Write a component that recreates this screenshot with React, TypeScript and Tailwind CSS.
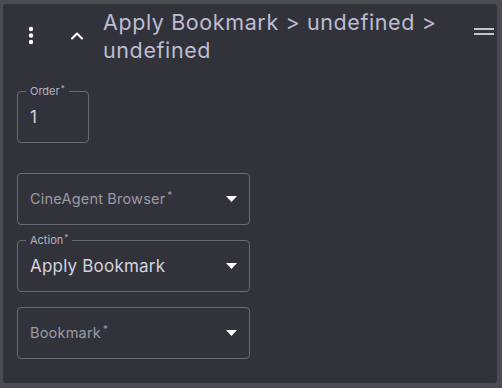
import { ChevronUp } from "lucide-react";

function Caret() {
  return (
    <svg width="11" height="6" viewBox="0 0 11 6" className="shrink-0">
      <path d="M0 0 L11 0 L5.5 6 Z" fill="#ffffff" />
    </svg>
  );
}

interface FieldProps {
  label: string;
  value?: string;
  select?: boolean;
  width: string;
}

function Field({ label, value, select, width }: FieldProps) {
  const filled = value !== undefined;
  return (
    <div className={`relative h-[52px] ${width} rounded-[4px] border border-[#6a6a72]`}>
      {filled && (
        <span className="absolute -top-[8px] left-[8px] bg-[#32323b] px-[4px] text-[11px] leading-[14px] text-[#b4b4c0]">
          {label}
          <sup className="ml-[1px] text-[8px]">*</sup>
        </span>
      )}
      <div className="flex h-full items-center justify-between pl-[12px] pr-[12px]">
        {filled ? (
          <span className="pt-[2px] text-[17px] tracking-[0.2px] text-[#d4d4de]">{value}</span>
        ) : (
          <span className="text-[14.5px] tracking-[0.2px] text-[#9b9ba6]">
            {label}
            <sup className="ml-[2px] text-[10px]">*</sup>
          </span>
        )}
        {select && <Caret />}
      </div>
    </div>
  );
}

export default function App() {
  return (
    <div className="h-[388px] w-[502px] bg-[#4b4b52] pl-[3px] pr-[5px] pt-[4px] pb-[5px] font-['Inter',sans-serif]">
      <div className="h-full rounded-[3px] bg-[#32323b]">
        {/* Header */}
        <div className="flex items-start">
          <div className="flex items-center pl-[22px] pt-[22px]">
            <svg width="12" height="20" viewBox="0 0 12 20">
              <circle cx="6" cy="3" r="2.2" fill="#fff" />
              <circle cx="6" cy="9.5" r="2.2" fill="#fff" />
              <circle cx="6" cy="16" r="2.2" fill="#fff" />
            </svg>
            <ChevronUp size={20} strokeWidth={2.5} color="#fff" className="ml-[30px]" />
          </div>
          <h2 className="ml-[16px] mt-[4px] w-[360px] text-[21.5px] leading-[28px] tracking-[0.6px] text-[#bdbdd0]">
            Apply Bookmark &gt; undefined &gt; undefined
          </h2>
          <div className="ml-auto mr-[3px] mt-[24px] flex flex-col gap-[3px]">
            <div className="h-[2px] w-[20px] bg-[#c4c4d0]" />
            <div className="h-[2px] w-[20px] bg-[#c4c4d0]" />
          </div>
        </div>

        {/* Form */}
        <div className="flex flex-col gap-[15px] pl-[14px] pt-[27px]">
          <Field label="Order" value="1" width="w-[72px]" />
          <div className="mt-[15px]">
            <Field label="CineAgent Browser" select width="w-[233px]" />
          </div>
          <Field label="Action" value="Apply Bookmark" select width="w-[233px]" />
          <Field label="Bookmark" select width="w-[233px]" />
        </div>
      </div>
    </div>
  );
}
